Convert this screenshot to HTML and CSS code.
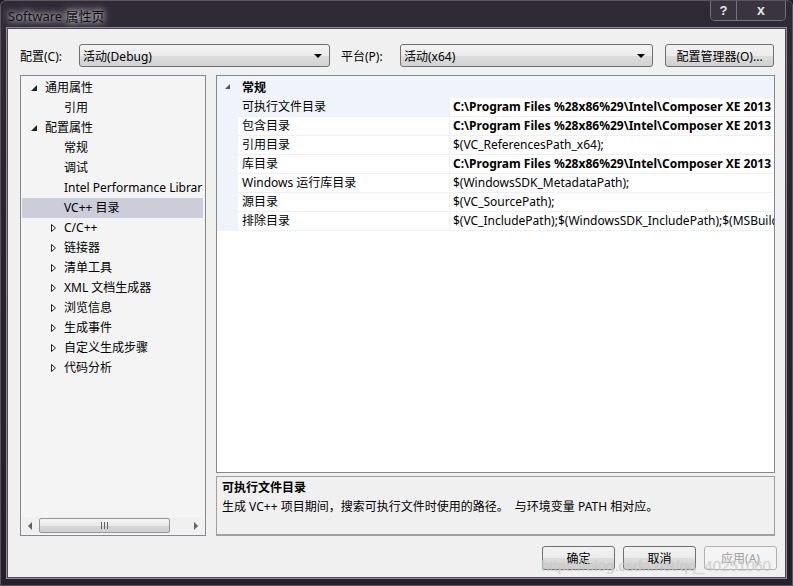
FILE: index.html
```html
<!DOCTYPE html>
<html lang="zh-CN">
<head>
    <meta charset="UTF-8">
    <title>Software 属性页</title>
    <link rel="stylesheet" href="styles.css">
</head>
<body>
    <div class="window">
        <div class="titlebar">
            <span class="title">Software 属性页</span>
            <div class="caption-btns">
                <span class="cap-btn help">?</span>
                <span class="cap-btn close">x</span>
            </div>
        </div>
        <div class="client">
            <div class="toolbar">
                <span class="tb-label">配置(C):</span>
                <div class="combo combo-config"><span>活动(Debug)</span><i class="drop"></i></div>
                <span class="tb-label">平台(P):</span>
                <div class="combo combo-platform"><span>活动(x64)</span><i class="drop"></i></div>
                <div class="btn btn-manager">配置管理器(O)...</div>
            </div>

            <div class="main">
                <div class="tree">
                    <div class="tree-rows">
                        <div class="node lvl0"><i class="exp"></i>通用属性</div>
                        <div class="node leaf">引用</div>
                        <div class="node lvl0"><i class="exp"></i>配置属性</div>
                        <div class="node leaf">常规</div>
                        <div class="node leaf">调试</div>
                        <div class="node leaf">Intel Performance Libraries</div>
                        <div class="node leaf selected">VC++ 目录</div>
                        <div class="node coll"><svg class="col" width="7" height="10" viewBox="0 0 7 10"><path d="M1.5 1.5 L5.5 5 L1.5 8.5 Z" fill="none" stroke="#222"/></svg>C/C++</div>
                        <div class="node coll"><svg class="col" width="7" height="10" viewBox="0 0 7 10"><path d="M1.5 1.5 L5.5 5 L1.5 8.5 Z" fill="none" stroke="#222"/></svg>链接器</div>
                        <div class="node coll"><svg class="col" width="7" height="10" viewBox="0 0 7 10"><path d="M1.5 1.5 L5.5 5 L1.5 8.5 Z" fill="none" stroke="#222"/></svg>清单工具</div>
                        <div class="node coll"><svg class="col" width="7" height="10" viewBox="0 0 7 10"><path d="M1.5 1.5 L5.5 5 L1.5 8.5 Z" fill="none" stroke="#222"/></svg>XML 文档生成器</div>
                        <div class="node coll"><svg class="col" width="7" height="10" viewBox="0 0 7 10"><path d="M1.5 1.5 L5.5 5 L1.5 8.5 Z" fill="none" stroke="#222"/></svg>浏览信息</div>
                        <div class="node coll"><svg class="col" width="7" height="10" viewBox="0 0 7 10"><path d="M1.5 1.5 L5.5 5 L1.5 8.5 Z" fill="none" stroke="#222"/></svg>生成事件</div>
                        <div class="node coll"><svg class="col" width="7" height="10" viewBox="0 0 7 10"><path d="M1.5 1.5 L5.5 5 L1.5 8.5 Z" fill="none" stroke="#222"/></svg>自定义生成步骤</div>
                        <div class="node coll"><svg class="col" width="7" height="10" viewBox="0 0 7 10"><path d="M1.5 1.5 L5.5 5 L1.5 8.5 Z" fill="none" stroke="#222"/></svg>代码分析</div>
                    </div>
                    <div class="hscroll">
                        <i class="arr-left"></i>
                        <div class="thumb"><span class="grip"></span></div>
                        <i class="arr-right"></i>
                    </div>
                </div>

                <div class="right">
                    <div class="grid">
                        <div class="cat-row"><span class="cat-arrow"><i class="exp small"></i></span><b>常规</b></div>
                        <div class="prop current"><span class="margin"></span><span class="name">可执行文件目录</span><span class="value bold">C:\Program Files %28x86%29\Intel\Composer XE 2013 SP1\bin\intel64</span></div>
                        <div class="prop"><span class="margin"></span><span class="name">包含目录</span><span class="value bold">C:\Program Files %28x86%29\Intel\Composer XE 2013 SP1\include</span></div>
                        <div class="prop"><span class="margin"></span><span class="name">引用目录</span><span class="value">$(VC_ReferencesPath_x64);</span></div>
                        <div class="prop"><span class="margin"></span><span class="name">库目录</span><span class="value bold">C:\Program Files %28x86%29\Intel\Composer XE 2013 SP1\compiler\lib\intel64</span></div>
                        <div class="prop"><span class="margin"></span><span class="name">Windows 运行库目录</span><span class="value">$(WindowsSDK_MetadataPath);</span></div>
                        <div class="prop"><span class="margin"></span><span class="name">源目录</span><span class="value">$(VC_SourcePath);</span></div>
                        <div class="prop"><span class="margin"></span><span class="name">排除目录</span><span class="value">$(VC_IncludePath);$(WindowsSDK_IncludePath);$(MSBuild_ExecutablePath);$(VC_LibraryPath_x64);</span></div>
                        <div class="grid-rest"></div>
                    </div>
                    <div class="desc">
                        <div class="desc-title">可执行文件目录</div>
                        <div class="desc-text">生成 VC++ 项目期间，搜索可执行文件时使用的路径。&nbsp; 与环境变量 PATH 相对应。</div>
                    </div>
                </div>
            </div>

            <div class="footer">
                <div class="btn btn-dlg">确定</div>
                <div class="btn btn-dlg">取消</div>
                <div class="btn btn-dlg disabled">应用(A)</div>
            </div>
            <div class="watermark">https://blog.csdn.net/qq_40251060</div>
        </div>
    </div>
</body>
</html>
```

FILE: styles.css
```css
* {
    box-sizing: border-box;
}
body {
    margin: 0;
    background: #1f1a24;
    font-family: 'Noto Sans', 'Noto Sans CJK SC', sans-serif;
    font-size: 12px;
    color: #000;
}
.window {
    width: 793px;
    height: 586px;
    display: flex;
    flex-direction: column;
    background: linear-gradient(180deg, #302936 0%, #2a2430 40%, #26202b 100%);
    border: 1px solid #5c5662;
    border-radius: 6px 6px 0 0;
    overflow: hidden;
}
.titlebar {
    height: 27px;
    display: flex;
    align-items: flex-start;
    justify-content: space-between;
}
.title {
    margin: 5px 0 0 7px;
    font-family: 'Noto Sans', 'Noto Sans CJK SC', sans-serif;
    font-size: 13px;
    color: #111;
    text-shadow: 0 0 5px rgba(255,255,255,0.8), 0 0 10px rgba(255,255,255,0.6), 0 0 14px rgba(255,255,255,0.4);
}
.caption-btns {
    display: flex;
    margin-right: 6px;
    margin-top: -1px;
    border: 1px solid #77717d;
    border-top: none;
    border-radius: 0 0 5px 5px;
    overflow: hidden;
}
.cap-btn {
    height: 20px;
    display: flex;
    align-items: center;
    justify-content: center;
    color: #e8e6ea;
    font-family: 'Liberation Sans', sans-serif;
    font-weight: bold;
    background: #3a3340;
}
.help {
    width: 26px;
    font-size: 13px;
    border-right: 1px solid #77717d;
}
.close {
    width: 48px;
    font-size: 14px;
}
.client {
    position: relative;
    flex: 1;
    margin: 0 6px 7px 6px;
    background: #f0f0f0;
    border: 1px solid #4e4856;
    box-shadow: 0 0 0 1px #8e8994;
    padding: 15px 10px 0 12px;
    display: flex;
    flex-direction: column;
}
.toolbar {
    display: flex;
    align-items: center;
    height: 23px;
}
.tb-label {
    width: 59px;
}
.combo {
    height: 23px;
    border: 1px solid #707070;
    border-radius: 3px;
    background: linear-gradient(180deg, #f3f3f3 0%, #ebebeb 50%, #dddddd 51%, #d2d2d2 100%);
    display: flex;
    align-items: center;
    justify-content: space-between;
    padding: 0 7px 0 3px;
}
.combo-config {
    width: 251px;
    margin-right: 11px;
}
.combo-platform {
    width: 253px;
    margin-right: 12px;
}
.drop {
    width: 0;
    height: 0;
    border-left: 4px solid transparent;
    border-right: 4px solid transparent;
    border-top: 4px solid #000;
}
.btn {
    height: 23px;
    border: 1px solid #707070;
    border-radius: 3px;
    background: linear-gradient(180deg, #f2f2f2 0%, #ebebeb 50%, #dddddd 51%, #cfcfcf 100%);
    display: flex;
    align-items: center;
    justify-content: center;
}
.btn-manager {
    width: 109px;
}
.main {
    display: flex;
    margin-top: 8px;
    height: 461px;
}
.tree {
    width: 186px;
    flex-shrink: 0;
    border: 1px solid #828790;
    background: #f4f4f4;
    display: flex;
    flex-direction: column;
    margin-right: 10px;
}
.tree-rows {
    flex: 1;
    padding: 2px 2px 0 1px;
    overflow: hidden;
}
.node {
    height: 20px;
    line-height: 20px;
    white-space: nowrap;
    overflow: hidden;
    position: relative;
}
.lvl0 {
    padding-left: 23px;
}
.leaf, .coll {
    padding-left: 42px;
}
.selected {
    background: #cbcdd9;
}
.exp {
    position: absolute;
    left: 9px;
    top: 7px;
    width: 0;
    height: 0;
    border-left: 6px solid transparent;
    border-bottom: 6px solid #222;
}
.exp.small {
    left: 8px;
    top: 8px;
    border-left-width: 5px;
    border-bottom-width: 5px;
    border-bottom-color: #555;
}
.col {
    position: absolute;
    left: 28px;
    top: 5px;
}
.hscroll {
    height: 17px;
    margin: 0 1px 1px 1px;
    background: #f0f0f0;
    display: flex;
    align-items: center;
    padding: 0 6px;
}
.arr-left, .arr-right {
    width: 0;
    height: 0;
    border-top: 4px solid transparent;
    border-bottom: 4px solid transparent;
}
.arr-left {
    border-right: 4px solid #606060;
}
.arr-right {
    border-left: 4px solid #606060;
    margin-left: auto;
}
.thumb {
    width: 131px;
    height: 15px;
    margin-left: 7px;
    border: 1px solid #979797;
    border-radius: 2px;
    background: linear-gradient(180deg, #f3f3f3 0%, #e8e8e8 50%, #d6d6d6 51%, #cfcfcf 100%);
    display: flex;
    align-items: center;
    justify-content: center;
}
.grip {
    width: 7px;
    height: 7px;
    background: repeating-linear-gradient(90deg, #606060 0 1px, transparent 1px 3px);
}
.right {
    flex: 1;
    min-width: 0;
    display: flex;
    flex-direction: column;
}
.grid {
    height: 398px;
    border: 1px solid #828790;
    background: #fff;
    display: flex;
    flex-direction: column;
    overflow: hidden;
}
.cat-row {
    height: 22px;
    flex-shrink: 0;
    background: #f0f4fa;
    display: flex;
    align-items: center;
    position: relative;
    padding-left: 25px;
}
.cat-arrow {
    position: absolute;
    left: 0;
    top: 0;
    width: 20px;
    height: 20px;
}
.prop {
    height: 19px;
    flex-shrink: 0;
    display: flex;
    white-space: nowrap;
    min-width: 0;
}
.margin {
    width: 21px;
    flex-shrink: 0;
    background: #f0f4fa;
}
.name, .value {
    height: 19px;
    line-height: 18px;
    border-bottom: 1px solid #edf0f5;
    overflow: hidden;
}
.name {
    width: 212px;
    flex-shrink: 0;
    padding-left: 4px;
    border-right: 1px solid #edf0f5;
}
.current .name {
    background: #f0f4fa;
}
.value {
    flex: 1;
    min-width: 0;
    padding-left: 3px;
}
.bold {
    font-weight: bold;
}
.grid-rest {
    flex: 1;
}
.desc {
    margin-top: 3px;
    height: 60px;
    border: 1px solid #a0a0a0;
    border-bottom-width: 2px;
    background: #f0f0f0;
    padding: 2px 5px;
}
.desc-title {
    font-weight: bold;
    line-height: 18px;
}
.desc-text {
    line-height: 20px;
    white-space: pre;
}
.footer {
    display: flex;
    justify-content: flex-end;
    margin-top: 10px;
    margin-right: -2px;
}
.btn-dlg {
    width: 73px;
    height: 24px;
    margin-left: 8px;
}
.disabled {
    color: #a0a0a0;
    border-color: #adb2b5;
    background: #f4f4f4;
}
.watermark {
    position: absolute;
    left: 533px;
    top: 528px;
    font-family: 'Liberation Sans', sans-serif;
    font-size: 15px;
    color: rgba(210,210,210,0.7);
    text-shadow: 0 0 1px rgba(150,150,150,0.35);
    white-space: nowrap;
}
```
